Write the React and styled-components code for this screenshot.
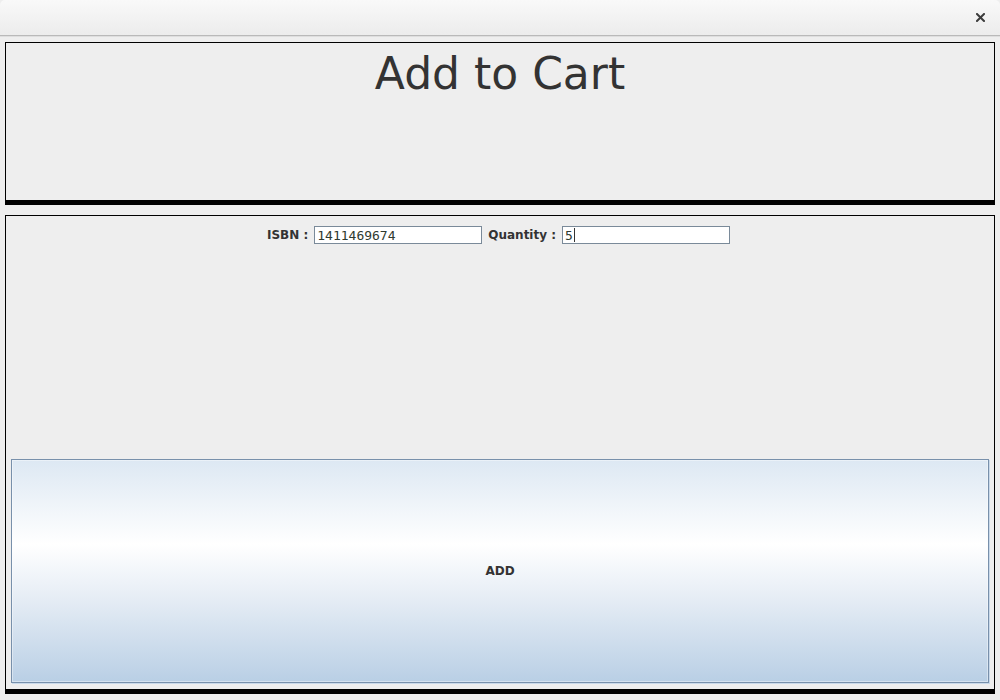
import React from 'react';
import styled, { createGlobalStyle } from 'styled-components';

const GlobalStyle = createGlobalStyle`
  html, body {
    margin: 0;
    padding: 0;
    background: #eeeeee;
    font-family: "DejaVu Sans", Verdana, sans-serif;
  }
  * {
    box-sizing: border-box;
  }
`;

const Window = styled.div`
  width: 1000px;
  height: 700px;
  display: flex;
  flex-direction: column;
  background: #eeeeee;
`;

const TitleBar = styled.div`
  height: 36px;
  flex-shrink: 0;
  display: flex;
  align-items: center;
  justify-content: flex-end;
  padding-right: 13px;
  background: linear-gradient(#f9f9f9, #ececec);
  border-bottom: 1px solid #b9b9b9;
  border-radius: 5px 5px 0 0;
  box-shadow: 0 1px 0 #dedede;
`;

const CloseButton = styled.button`
  width: 14px;
  height: 14px;
  padding: 0;
  border: none;
  background: none;
  display: flex;
  align-items: center;
  justify-content: center;
  cursor: pointer;

  svg {
    display: block;
  }
`;

const Body = styled.div`
  flex: 1;
  display: flex;
  flex-direction: column;
  gap: 10px;
  padding: 6px 5px 6px 5px;
`;

const Panel = styled.section`
  border: 1px solid #000;
  border-bottom-width: 5px;
  background: #eeeeee;
`;

const HeaderPanel = styled(Panel)`
  height: 163px;
  flex-shrink: 0;
  padding-top: 5px;
  text-align: center;
`;

const Title = styled.h1`
  margin: 0;
  font-size: 44px;
  font-weight: normal;
  line-height: 51px;
  color: #333333;
`;

const FormPanel = styled(Panel)`
  flex: 1;
  display: flex;
  flex-direction: column;
  padding: 10px 5px 5px 5px;
`;

const FieldRow = styled.div`
  display: flex;
  justify-content: center;
  align-items: center;
  gap: 6px;
  height: 18px;
  padding-right: 3px;
`;

const Label = styled.label`
  font-size: 12px;
  font-weight: bold;
  color: #333333;
`;

const Field = styled.div`
  width: 168px;
  height: 18px;
  display: flex;
  align-items: center;
  padding-left: 2px;
  background: #ffffff;
  border: 1px solid #7a8a99;
  font-family: "DejaVu Sans Mono", monospace;
  font-size: 13px;
  color: #2f3a2f;
`;

const Caret = styled.span`
  display: inline-block;
  width: 1px;
  height: 14px;
  background: #333333;
  margin-left: 1px;
`;

const Spacer = styled.div`
  flex: 1;
`;

const AddButton = styled.button`
  height: 224px;
  margin-bottom: 1px;
  flex-shrink: 0;
  border: 1px solid #7890ab;
  box-shadow: inset 0 0 0 1px rgba(255, 255, 255, 0.4), 1px 1px 0 #c9d9ea;
  background: linear-gradient(
    to bottom,
    #dde8f3 0%,
    #ffffff 38%,
    #e6edf5 62%,
    #b9cfe5 100%
  );
  font-family: "DejaVu Sans", Verdana, sans-serif;
  font-size: 12px;
  font-weight: bold;
  color: #333333;
  cursor: pointer;
`;

function CloseIcon() {
  return (
    <svg width="9" height="9" viewBox="0 0 9 9">
      <path d="M1 1 L8 8 M8 1 L1 8" stroke="#3c3c3c" strokeWidth="2" strokeLinecap="square" />
    </svg>
  );
}

function App() {
  return (
    <Window>
      <GlobalStyle />
      <TitleBar>
        <CloseButton type="button" aria-label="close">
          <CloseIcon />
        </CloseButton>
      </TitleBar>
      <Body>
        <HeaderPanel>
          <Title>Add to Cart</Title>
        </HeaderPanel>
        <FormPanel>
          <FieldRow>
            <Label>ISBN :</Label>
            <Field>1411469674</Field>
            <Label>Quantity :</Label>
            <Field>
              5
              <Caret />
            </Field>
          </FieldRow>
          <Spacer />
          <AddButton type="button">ADD</AddButton>
        </FormPanel>
      </Body>
    </Window>
  );
}

export default App;
